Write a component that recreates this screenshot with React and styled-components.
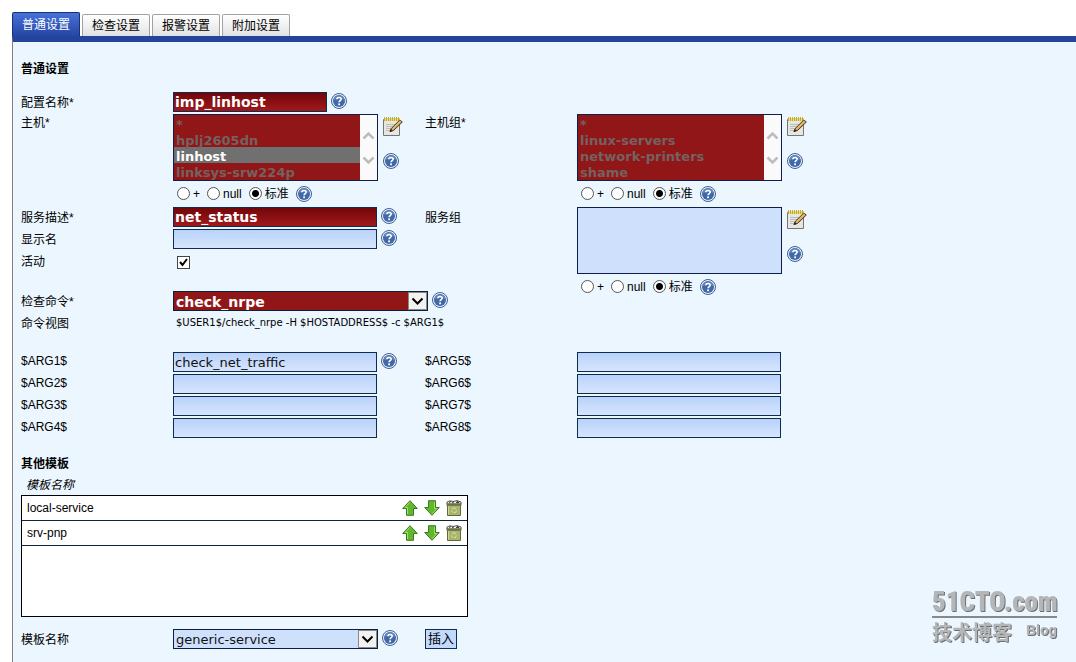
import styled, { createGlobalStyle, css } from 'styled-components'
import React, { useState } from 'react'

const GlobalStyle = createGlobalStyle`
  * {
    box-sizing: border-box;
  }
  body {
    margin: 0;
    background: #fff;
    color: #000;
    font-family: 'Liberation Sans', 'Noto Sans CJK SC', sans-serif;
    font-size: 12px;
    line-height: 20px;
  }
`
const Page = styled.div`
  display: flex;
  flex-direction: column;
  min-height: 100vh;
  padding: 12px 0 0 12px;
`
const Tabs = styled.nav`
  display: flex;
  align-items: flex-end;
  gap: 2px;
`
const Tab = styled.button`
  height: ${(props) => (props.$active ? 24 : 22)}px;
  padding: 0 9px;
  border: 1px solid ${(props) => (props.$active ? '#1c2f6e' : '#a2a2a2')};
  border-bottom: none;
  border-radius: 2px 2px 0 0;
  background: ${(props) =>
    props.$active
      ? 'linear-gradient(#4672dc, #2546a3)'
      : 'linear-gradient(#ffffff, #e2e2e2)'};
  color: ${(props) => (props.$active ? '#fff' : '#000')};
  font-family: inherit;
  font-size: 12px;
  line-height: 20px;
`
const Panel = styled.main`
  flex: 1;
  border-top: 6px solid #24449c;
  border-left: 1px solid #808080;
  background: #ebf6ff;
  padding: 16px 8px 12px;
`
const Title = styled.h2`
  margin: 0;
  font-size: 12px;
  line-height: 22px;
  font-weight: bold;
`
const Grid = styled.div`
  display: grid;
  grid-template-columns: 152px 252px 152px 1fr;
  grid-auto-rows: minmax(22px, auto);
  align-items: start;
  margin-top: ${(props) => props.$top}px;
`
const Label = styled.label`
  grid-column: ${(props) => props.$col || 1};
  line-height: ${(props) => (props.$tight ? 18 : 22)}px;
`
const Field = styled.div`
  grid-column: ${(props) => (props.$col ? props.$col : 2)};
  grid-row: ${(props) => props.$rows || 'auto'};
  min-height: ${(props) => props.$height || 22}px;
  display: flex;
  align-items: flex-start;
  gap: 4px;
`
const verdana = css`
  font-family: 'DejaVu Sans', Verdana, sans-serif;
  font-size: ${(props) => (props.$required ? 14 : 13)}px;
`
const TextInput = styled.input`
  ${verdana}
  width: ${(props) => (props.$short ? 154 : 204)}px;
  height: 20px;
  padding: 0 1px;
  border: 1px solid #0d2c50;
  border-radius: 0;
  outline: none;
  background: ${(props) =>
    props.$required
      ? 'linear-gradient(#720609, #a0191c)'
      : 'linear-gradient(#b9d2fa, #d6e5fd)'};
  color: ${(props) => (props.$required ? '#fff' : '#111')};
  font-weight: ${(props) => (props.$required ? 'bold' : 'normal')};
`
const ListFrame = styled.div`
  display: flex;
  width: 205px;
  height: 67px;
  border: 1px solid #0d1f50;
  background: ${(props) => (props.$required ? '#911618' : '#cfe0fc')};
`
const ListSelect = styled.select`
  ${verdana}
  flex: 1;
  min-width: 0;
  height: 65px;
  padding: 0;
  border: none;
  outline: none;
  border-radius: 0;
  background: transparent;
  overflow: hidden;
  scrollbar-width: none;
  option {
    min-height: 16px;
    height: 16px;
    padding: 2px 2px 0;
    line-height: 14px;
    font-weight: bold;
    color: #746260;
  }
  option:checked {
    background: linear-gradient(#707070, #707070);
    color: #fff;
  }
`
const Scroll = styled.div`
  display: flex;
  flex-direction: column;
  justify-content: center;
  gap: 16px;
  width: 17px;
  background: #fafafa;
  align-items: center;
`
const IconColumn = styled.div`
  display: flex;
  flex-direction: column;
  align-items: flex-start;
  gap: 16px;
  padding: 1px 0 0 1px;
`
const IconButton = styled.button`
  display: block;
  padding: 1px 0 0;
  border: none;
  background: none;
  line-height: 0;
`
const Modes = styled.div`
  display: flex;
  align-items: center;
  height: 25px;
  padding-left: 4px;
  gap: 7px;
  label {
    display: flex;
    align-items: center;
    gap: 3px;
  }
`
const Radio = styled.input`
  appearance: none;
  width: 13px;
  height: 13px;
  margin: 0;
  border: 1px solid #555;
  border-radius: 50%;
  background: #fff;
  &:checked {
    background: radial-gradient(circle, #000 3px, #fff 4px);
  }
`
const Check = styled.input`
  appearance: none;
  width: 13px;
  height: 13px;
  margin: 0;
  border: 1px solid #444;
  background: #fff;
`
const CheckBox = styled.span`
  position: relative;
  display: flex;
  margin: 5px 0 0 4px;
  svg {
    position: absolute;
    inset: 0;
    pointer-events: none;
  }
`
const Drop = styled.div`
  position: relative;
  flex: none;
  width: ${(props) => (props.$wide ? 255 : 205)}px;
  svg {
    position: absolute;
    top: 1px;
    right: 1px;
    pointer-events: none;
  }
`
const DropSelect = styled.select`
  ${verdana}
  appearance: none;
  display: block;
  width: 100%;
  height: 20px;
  padding: 1px 20px 0 2px;
  border: 1px solid #0d1f40;
  border-radius: 0;
  outline: none;
  background: ${(props) => (props.$required ? '#911618' : '#cfe0fc')};
  color: ${(props) => (props.$required ? '#fff' : '#111')};
  font-weight: ${(props) => (props.$required ? 'bold' : 'normal')};
`
const Command = styled.output`
  font-family: 'DejaVu Sans', Verdana, sans-serif;
  font-size: 10px;
  line-height: 20px;
  padding-left: 3px;
  white-space: nowrap;
`
const Templates = styled.section`
  margin-top: 13px;
`
const TableBox = styled.div`
  width: 447px;
  height: 122px;
  border: 1px solid #000;
  background: #fff;
`
const Caption = styled.div`
  padding-left: 5px;
  font-style: italic;
`
const Table = styled.table`
  width: 100%;
  border-collapse: separate;
  border-spacing: 0;
  td {
    height: 25px;
    padding: 0 5px;
    border-bottom: 1px solid #10253c;
  }
`
const Actions = styled.div`
  display: flex;
  justify-content: flex-end;
  gap: 6px;
  padding-bottom: 2px;
`
const Insert = styled.button`
  grid-column: 3;
  justify-self: start;
  height: 20px;
  padding: 0 2px;
  border: 1px solid #0d2c50;
  background: #c3d9fb;
  font-family: inherit;
  font-size: 13px;
  line-height: 18px;
`
const Mark = styled.aside`
  position: fixed;
  right: 19px;
  bottom: 14px;
  width: 125px;
  color: #b4b6b8;
  font-weight: bold;
  text-shadow: 1px 1px 0 #6d7072;
  pointer-events: none;
`
const MarkName = styled.div`
  border-bottom: 2px solid #85898c;
  font-family: 'Roboto Condensed', 'Open Sans Condensed', 'Noto Sans Condensed',
    'Liberation Sans', sans-serif;
  font-size: 27px;
  font-weight: 900;
  line-height: 28px;
  white-space: nowrap;
`
const MarkSub = styled.div`
  display: flex;
  justify-content: space-between;
  font-size: 20px;
  line-height: 30px;
  span:last-child {
    font-size: 14px;
    line-height: 24px;
  }
`

const Help = () => (
  <IconButton type="button" aria-label="help">
    <svg width="16" height="16" viewBox="0 0 16 16">
      <circle cx="8" cy="8" r="7.5" fill="#e9f0f8" stroke="#3c619c" />
      <circle cx="8" cy="8" r="6" fill="#4169a8" />
      <path d="M2.5 7A5.6 5.6 0 0 1 13.5 7Q8 5 2.5 7Z" fill="#6385ba" />
      <path
        d="M5.9 6.2C5.9 3.9 10.2 3.9 10.2 6.1C10.2 7.6 8.1 7.6 8.1 9.3"
        fill="none"
        stroke="#fff"
        strokeWidth="1.6"
      />
      <rect x="7.2" y="10.4" width="1.8" height="1.8" fill="#fff" />
    </svg>
  </IconButton>
)

const Note = () => (
  <IconButton type="button" aria-label="edit">
    <svg width="20" height="20" viewBox="0 0 20 20">
      <path d="M.5 3.5H16.5V19.5H.5Z" fill="#e6e6e2" stroke="#76746e" />
      <path d="M1 2H17V5H1Z" fill="#eddc72" />
      <path
        d="M1.5 1V5M3.5 1V5M5.5 1V5M7.5 1V5M9.5 1V5M11.5 1V5M13.5 1V5M15.5 1V5"
        stroke="#b39b2c"
        strokeWidth=".8"
      />
      <path d="M3 8.5H12M3 10.5H11M3 12.5H9M3 14.5H7" stroke="#bcbcb8" />
      <path
        d="M7 15.5L8.2 12.5L16.8 4L19.3 6L10.5 14.5Z"
        fill="#cda256"
        stroke="#4c381c"
      />
      <path d="M9.5 13L17.8 5" stroke="#f4d388" strokeWidth=".9" />
      <path d="M6.6 16L7.8 13L9.8 14.8Z" fill="#222" />
    </svg>
  </IconButton>
)

const Arrow = ({ down }) => (
  <IconButton type="button" aria-label={down ? 'move down' : 'move up'}>
    <svg width="16" height="16" viewBox="0 0 16 16">
      <g transform={down ? 'rotate(180 8 8)' : undefined}>
        <path
          d="M8 .7L15.3 8.5H11.5V15.3H4.5V8.5H.7Z"
          fill="#62b82c"
          stroke="#3a7a1c"
        />
        <path d="M8 2.2L3 7.5H5.5V14.2" fill="none" stroke="#a4dd71" />
      </g>
    </svg>
  </IconButton>
)

const Trash = () => (
  <IconButton type="button" aria-label="delete">
    <svg width="16" height="16" viewBox="0 0 16 16">
      <path d="M1.5 5H14.5V15.5H1.5Z" fill="#a9b46d" stroke="#62693b" />
      <path d="M2.5 6V14.5" stroke="#d0d79a" />
      <path d="M1 2L4 .8L7 1.5L11 .6L15 2V4H1Z" fill="#f6f6f2" stroke="#55564c" />
      <path d="M3 2.5L5 1.5M6 3L8 1.8M10 2.5L12 1.5L13 3" stroke="#333" />
      <path d="M.5 4.5H15.5" stroke="#6c7047" strokeWidth="2" />
      <path
        d="M6 9L8 7.5L10 9M10.5 10.5L9.5 12.5H8M6.5 12.5L5.5 10.5"
        fill="none"
        stroke="#dce3b0"
      />
    </svg>
  </IconButton>
)

const Chevron = ({ down }) => (
  <svg width="13" height="9" viewBox="0 0 13 9">
    <path
      d={down ? 'M1.5 1.5L6.5 6.5L11.5 1.5' : 'M1.5 7.5L6.5 2.5L11.5 7.5'}
      fill="none"
      stroke="#bdbdbd"
      strokeWidth="2.5"
    />
  </svg>
)

const Dropdown = ({ id, value, wide, required }) => (
  <Drop $wide={wide}>
    <DropSelect id={id} $required={required}>
      <option>{value}</option>
    </DropSelect>
    <svg width="19" height="18" viewBox="0 0 19 18">
      <rect x=".5" y=".5" width="18" height="17" fill="#f2f2f0" stroke="#8a8a84" />
      <path d="M4.5 6.5L9.5 11.5L14.5 6.5" fill="none" stroke="#000" strokeWidth="2" />
    </svg>
  </Drop>
)

const ListField = ({ id, col, rows, items = [], selected = [] }) => {
  const required = items.length > 0
  return (
    <Field $col={col} $rows={rows} $height={93}>
      <div>
        <ListFrame $required={required}>
          <ListSelect id={id} multiple size={4} defaultValue={selected}>
            {items.map((item) => (
              <option key={item}>{item}</option>
            ))}
          </ListSelect>
          {required && (
            <Scroll>
              <Chevron />
              <Chevron down />
            </Scroll>
          )}
        </ListFrame>
        <Modes>
          {['+', 'null', '标准'].map((mode) => (
            <label key={mode}>
              <Radio type="radio" name={`${id}-mode`} defaultChecked={mode === '标准'} />
              {mode}
            </label>
          ))}
          <Help />
        </Modes>
      </div>
      <IconColumn>
        <Note />
        <Help />
      </IconColumn>
    </Field>
  )
}

const App = () => {
  const [tabnum, setTabnum] = useState(0)
  const [active, setActive] = useState(true)
  const tabs = ['普通设置', '检查设置', '报警设置', '附加设置']
  const templates = ['local-service', 'srv-pnp']
  return (
    <Page>
      <GlobalStyle />
      <Tabs>
        {tabs.map((tab, i) => (
          <Tab
            key={tab}
            type="button"
            $active={tabnum === i}
            onClick={() => {
              setTabnum(i)
            }}
          >
            {tab}
          </Tab>
        ))}
      </Tabs>
      <Panel>
        <Title>普通设置</Title>
        <Grid $top={12}>
          <Label htmlFor="config">配置名称*</Label>
          <Field>
            <TextInput id="config" $short $required defaultValue="imp_linhost" />
            <Help />
          </Field>

          <Label htmlFor="hosts" $tight>
            主机*
          </Label>
          <ListField
            id="hosts"
            items={['*', 'hplj2605dn', 'linhost', 'linksys-srw224p']}
            selected={['linhost']}
          />
          <Label htmlFor="hostgroups" $col={3} $tight>
            主机组*
          </Label>
          <ListField
            id="hostgroups"
            col={4}
            items={['*', 'linux-servers', 'network-printers', 'shame']}
          />

          <Label htmlFor="service">服务描述*</Label>
          <Field>
            <TextInput id="service" $required defaultValue="net_status" />
            <Help />
          </Field>
          <Label htmlFor="servicegroups" $col={3}>
            服务组
          </Label>
          <ListField id="servicegroups" col={4} rows="3 / span 4" />

          <Label htmlFor="display">显示名</Label>
          <Field>
            <TextInput id="display" />
            <Help />
          </Field>

          <Label htmlFor="active">活动</Label>
          <Field $height={40}>
            <CheckBox>
              <Check
                id="active"
                type="checkbox"
                checked={active}
                onChange={() => setActive(!active)}
              />
              {active && (
                <svg width="13" height="13" viewBox="0 0 13 13">
                  <path d="M3 6L5.5 9L10 3" fill="none" stroke="#000" strokeWidth="2" />
                </svg>
              )}
            </CheckBox>
          </Field>

          <Label htmlFor="command">检查命令*</Label>
          <Field>
            <Dropdown id="command" value="check_nrpe" wide required />
            <Help />
          </Field>

          <Label htmlFor="view">命令视图</Label>
          <Field>
            <Command id="view">$USER1$/check_nrpe -H $HOSTADDRESS$ -c $ARG1$</Command>
          </Field>
        </Grid>

        <Grid $top={17}>
          {[1, 2, 3, 4].map((n) => (
            <React.Fragment key={n}>
              <Label htmlFor={`arg${n}`} $tight>{`$ARG${n}$`}</Label>
              <Field>
                <TextInput
                  id={`arg${n}`}
                  defaultValue={n === 1 ? 'check_net_traffic' : ''}
                />
                {n === 1 && <Help />}
              </Field>
              <Label htmlFor={`arg${n + 4}`} $col={3} $tight>{`$ARG${n + 4}$`}</Label>
              <Field $col={4}>
                <TextInput id={`arg${n + 4}`} />
              </Field>
            </React.Fragment>
          ))}
        </Grid>

        <Templates>
          <Title>其他模板</Title>
          <Caption>模板名称</Caption>
          <TableBox>
            <Table>
              <tbody>
                {templates.map((name) => (
                  <tr key={name}>
                    <td>{name}</td>
                    <td>
                      <Actions>
                        <Arrow />
                        <Arrow down />
                        <Trash />
                      </Actions>
                    </td>
                  </tr>
                ))}
              </tbody>
            </Table>
          </TableBox>
        </Templates>

        <Grid $top={12}>
          <Label htmlFor="template">模板名称</Label>
          <Field>
            <Dropdown id="template" value="generic-service" />
            <Help />
          </Field>
          <Insert type="button">插入</Insert>
        </Grid>
      </Panel>
      <Mark>
        <MarkName>51CTO.com</MarkName>
        <MarkSub>
          <span>技术博客</span>
          <span>Blog</span>
        </MarkSub>
      </Mark>
    </Page>
  )
}

export default App
